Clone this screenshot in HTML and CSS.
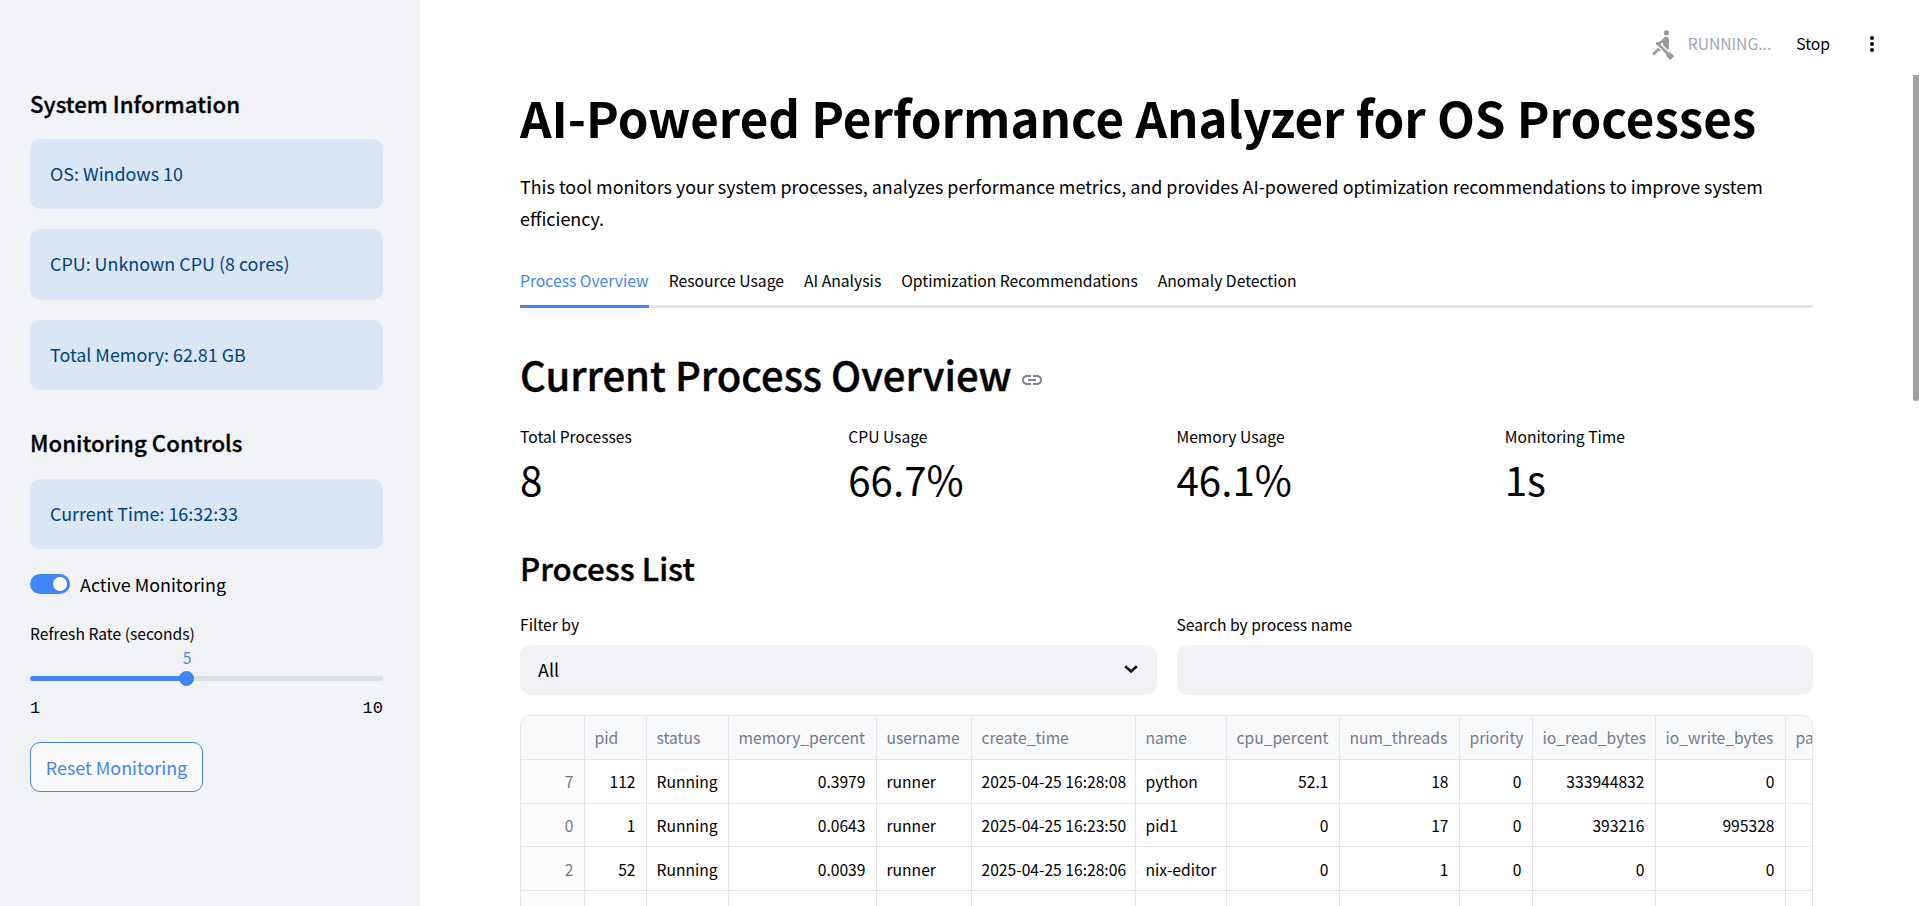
FILE: index.html
```html
<!DOCTYPE html>
<html lang="en">
<head>
<meta charset="utf-8">
<title>AI-Powered Performance Analyzer for OS Processes</title>
<link rel="stylesheet" href="styles.css">
</head>
<body>
<div class="app">
  <aside class="sidebar">
    <h3 class="side-title">System Information</h3>
    <div class="alert">OS: Windows 10</div>
    <div class="alert">CPU: Unknown CPU (8 cores)</div>
    <div class="alert">Total Memory: 62.81 GB</div>
    <h3 class="side-title second">Monitoring Controls</h3>
    <div class="alert">Current Time: 16:32:33</div>
    <label class="toggle-row"><span class="toggle"><span class="knob"></span></span><span>Active Monitoring</span></label>
    <div class="slider">
      <div class="label">Refresh Rate (seconds)</div>
      <div class="slider-value">5</div>
      <div class="track"><div class="fill"></div><div class="thumb"></div></div>
      <div class="ticks"><span>1</span><span>10</span></div>
    </div>
    <button class="reset">Reset Monitoring</button>
  </aside>
  <main class="main">
    <header class="topbar">
      <svg class="rower" viewBox="0 0 24 24"><path d="M8.5 14.5L4 19l1.5 1.5L9 17h2l-2.5-2.5zM15 1c-1.1 0-2 .9-2 2s.9 2 2 2 2-.9 2-2-.9-2-2-2zm6 20.01L18 24l-2.99-3.01V19.5l-7.1-7.09c-.31.05-.61.07-.91.07v-2.16c1.66.03 3.61-.87 4.67-2.04l1.4-1.55c.19-.21.43-.38.69-.5.29-.14.62-.23.96-.23h.03C15.99 6.01 17 7.02 17 8.26v5.75c0 .84-.35 1.61-.92 2.16l-3.58-3.58v-2.27c-.63.52-1.43 1.02-2.29 1.39L16.5 18H18l3 3.01z"/></svg>
      <span class="running">RUNNING...</span>
      <span class="stop">Stop</span>
      <svg class="kebab" viewBox="0 0 6 18"><circle cx="3" cy="3" r="2"/><circle cx="3" cy="9" r="2"/><circle cx="3" cy="15" r="2"/></svg>
    </header>
    <div class="content">
      <h1>AI-Powered Performance Analyzer for OS Processes</h1>
      <p class="intro">This tool monitors your system processes, analyzes performance metrics, and provides AI-powered optimization recommendations to improve system efficiency.</p>
      <nav class="tabs">
        <span class="tab active">Process Overview</span>
        <span class="tab">Resource Usage</span>
        <span class="tab">AI Analysis</span>
        <span class="tab">Optimization Recommendations</span>
        <span class="tab">Anomaly Detection</span>
      </nav>
      <h2>Current Process Overview <svg class="link" viewBox="0 0 24 24"><path d="M3.9 12c0-1.71 1.39-3.1 3.1-3.1h4V7H7c-2.76 0-5 2.24-5 5s2.24 5 5 5h4v-1.9H7c-1.71 0-3.1-1.39-3.1-3.1zM8 13h8v-2H8v2zm9-6h-4v1.9h4c1.71 0 3.1 1.39 3.1 3.1s-1.39 3.1-3.1 3.1h-4V17h4c2.76 0 5-2.24 5-5s-2.24-5-5-5z"/></svg></h2>
      <section class="metrics">
        <div><div class="label">Total Processes</div><div class="metric-value">8</div></div>
        <div><div class="label">CPU Usage</div><div class="metric-value">66.7%</div></div>
        <div><div class="label">Memory Usage</div><div class="metric-value">46.1%</div></div>
        <div><div class="label">Monitoring Time</div><div class="metric-value">1s</div></div>
      </section>
      <h2 class="sub">Process List</h2>
      <section class="filters">
        <div><div class="label">Filter by</div>
          <div class="field select"><span>All</span><svg class="chev" viewBox="0 0 14 8"><path d="M1.2 1.2L7 6.4l5.8-5.2"/></svg></div></div>
        <div><div class="label">Search by process name</div><div class="field"></div></div>
      </section>
      <div class="grid-wrap">
        <table class="grid">
          <thead><tr><th></th><th>pid</th><th>status</th><th>memory_percent</th><th>username</th><th>create_time</th><th>name</th><th>cpu_percent</th><th>num_threads</th><th>priority</th><th>io_read_bytes</th><th>io_write_bytes</th><th>parent_pid</th></tr></thead>
          <tbody>
            <tr><td class="idx">7</td><td class="n">112</td><td>Running</td><td class="n">0.3979</td><td>runner</td><td>2025-04-25 16:28:08</td><td>python</td><td class="n">52.1</td><td class="n">18</td><td class="n">0</td><td class="n">333944832</td><td class="n">0</td><td></td></tr>
            <tr><td class="idx">0</td><td class="n">1</td><td>Running</td><td class="n">0.0643</td><td>runner</td><td>2025-04-25 16:23:50</td><td>pid1</td><td class="n">0</td><td class="n">17</td><td class="n">0</td><td class="n">393216</td><td class="n">995328</td><td></td></tr>
            <tr><td class="idx">2</td><td class="n">52</td><td>Running</td><td class="n">0.0039</td><td>runner</td><td>2025-04-25 16:28:06</td><td>nix-editor</td><td class="n">0</td><td class="n">1</td><td class="n">0</td><td class="n">0</td><td class="n">0</td><td></td></tr>
            <tr><td class="idx"></td><td></td><td></td><td></td><td></td><td></td><td></td><td></td><td></td><td></td><td></td><td></td><td></td></tr>
          </tbody>
        </table>
      </div>
    </div>
    <div class="scroll-thumb"></div>
  </main>
</div>
</body>
</html>
```
FILE: styles.css
```css
* { box-sizing: border-box; }
html, body { margin: 0; height: 100%; overflow: hidden; }
body {
  font-family: "Noto Sans CJK JP", "Noto Sans", sans-serif;
  font-size: 17.9px;
  line-height: 32px;
  color: #000;
  background: #fff;
}
.app { display: flex; height: 906px; }

/* Sidebar */
.sidebar {
  width: 420px;
  flex: none;
  background: #f0f2f6;
  padding: 87px 37px 0 30px;
}
.side-title { margin: 0 0 19.5px; font-size: 22.25px; line-height: 32px; font-weight: 500; -webkit-text-stroke: 0.3px #000; }
.side-title.second { margin: 36px 0 20.5px; }
.alert {
  height: 70.5px;
  margin-bottom: 20px;
  padding: 18px 20px;
  border-radius: 10px;
  background: #dae6f3;
  color: #004280;
}
.toggle-row { display: flex; align-items: center; gap: 10px; height: 32px; margin-top: -1.5px; }
.toggle { width: 40px; height: 20px; border-radius: 10px; background: #4285f4; display: flex; justify-content: flex-end; align-items: center; padding-right: 3px; }
.knob { width: 14px; height: 14px; border-radius: 50%; background: #fff; }
.label { font-size: 15.65px; line-height: 22px; }
.slider { margin-top: 23px; }
.slider-value { color: #4285f4; font-size: 15.65px; line-height: 22px; width: 314px; text-align: center; margin-top: 2px; }
.track { position: relative; height: 5px; margin-top: 7.5px; border-radius: 3px; background: #dcdfe8; }
.fill { width: 44.44%; height: 100%; border-radius: 3px; background: #4285f4; }
.thumb { position: absolute; left: 44.44%; top: 50%; width: 15px; height: 15px; margin: -7.5px 0 0 -7.5px; border-radius: 50%; background: #4285f4; }
.ticks { display: flex; justify-content: space-between; margin-top: 17.5px; font-family: "Liberation Mono", monospace; font-size: 17px; line-height: 20px; }
.reset {
  display: block;
  margin-top: 23px;
  width: 173px;
  height: 50px;
  padding: 0;
  font: inherit;
  color: #4285f4;
  background: #fafafc;
  border: 1px solid #4285f4;
  border-radius: 10px;
}

/* Main */
.main { position: relative; flex: 1; min-width: 0; overflow: hidden; }
.topbar { display: flex; align-items: center; justify-content: flex-end; height: 84px; padding: 4px 44px 0 0; font-size: 15.65px; }
.rower { width: 31px; height: 31px; fill: #9b9b9b; margin-right: 10px; }
.running { color: #a3a8b8; }
.stop { margin-left: 25px; margin-right: 39px; }
.kebab { width: 6px; height: 18px; fill: #000; }
.content { padding: 0 106px 0 100px; }
h1 { margin: 0; font-size: 49.25px; line-height: 66px; font-weight: 700; white-space: nowrap; }
.intro { margin: 20px 0 0; }
.tabs { display: flex; gap: 20px; margin-top: 23.5px; height: 50px; border-bottom: 3px solid #e4e4e6; font-size: 15.7px; line-height: 45px; }
.tab { height: 50px; }
.tab.active { color: #4285f4; border-bottom: 3px solid #4285f4; }
h2 { margin: 39px 0 0; font-size: 40px; line-height: 54px; font-weight: 500; -webkit-text-stroke: 0.4px #000; }
.link { width: 24px; height: 24px; fill: #808495; stroke-width: 0; vertical-align: -1px; margin-left: -1px; }
.metrics { display: grid; grid-template-columns: repeat(4, 1fr); gap: 20px; margin-top: 25px; }
.metric-value { font-size: 40.3px; line-height: 56px; margin-top: 3px; }
h2.sub { margin-top: 39px; font-size: 31.2px; line-height: 44px; -webkit-text-stroke: 0.35px #000; }
.filters { display: grid; grid-template-columns: 1fr 1fr; gap: 20px; margin-top: 24px; }
.field { height: 50px; margin-top: 9px; border-radius: 10px; background: #f0f2f6; }
.select { display: flex; align-items: center; justify-content: space-between; padding: 0 19px 1px 18px; }
.chev { width: 14px; height: 8px; fill: none; stroke: #111; stroke-width: 2.6; }
.grid-wrap { margin-top: 20px; height: 400px; overflow: hidden; border: 1.5px solid #e6e6ea; border-radius: 10px; }
.grid { border-collapse: collapse; table-layout: fixed; width: 1360px; font-size: 15.65px; line-height: 22px; }
.grid th, .grid td { height: 43.7px; padding: 2px 10px 0; border: 1.5px solid #e6e6ea; white-space: nowrap; overflow: hidden; font-weight: 400; text-align: left; }
.grid tr > :first-child { border-left: 0; }
.grid thead th { border-top: 0; background: #f8f9fb; color: #767a8a; height: 44px; }
.grid td.n { text-align: right; }
.grid td.idx { text-align: right; color: #767a8a; background: #fcfcfd; }
.grid th:nth-child(1) { width: 63px; }
.grid th:nth-child(2) { width: 62px; }
.grid th:nth-child(3) { width: 82px; }
.grid th:nth-child(4) { width: 148px; }
.grid th:nth-child(5) { width: 95px; }
.grid th:nth-child(6) { width: 164px; }
.grid th:nth-child(7) { width: 91px; }
.grid th:nth-child(8) { width: 113px; }
.grid th:nth-child(9) { width: 120px; }
.grid th:nth-child(10) { width: 73px; }
.grid th:nth-child(11) { width: 123px; }
.grid th:nth-child(12) { width: 130px; }
.grid th:nth-child(13) { width: 96px; }
.scroll-thumb { position: absolute; top: 75px; right: 0; width: 6px; height: 326px; background: #a0a0a0; border-radius: 0 0 3px 3px; }
```
